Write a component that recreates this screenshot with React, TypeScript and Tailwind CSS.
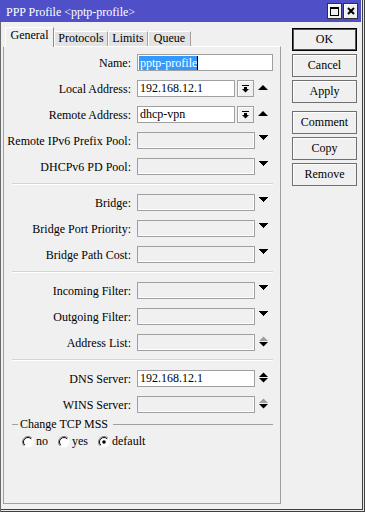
import React from "react";

const TriDown = () => (
  <svg width="9" height="13" viewBox="0 0 9 13" className="shrink-0" shapeRendering="crispEdges">
    <polygon points="0,1 9,1 4.5,6" fill="#000" />
  </svg>
);

const TriUp = () => (
  <svg width="10" height="13" viewBox="0 0 10 13" className="shrink-0">
    <polygon points="0,8 10,8 5,3" fill="#000" />
  </svg>
);

const UpDown = ({ upColor = "#000" }: { upColor?: string }) => (
  <svg width="9" height="13" viewBox="0 0 9 13" className="shrink-0">
    <polygon points="0,5 9,5 4.5,0.5" fill={upColor} />
    <polygon points="0,6 9,6 4.5,10.5" fill="#000" />
  </svg>
);

const DropBtn = () => (
  <div className="ml-[2px] w-[17px] h-[17px] border border-[#a0a0a0] bg-[#f0f0f0] shadow-[inset_1px_1px_0_#fff] flex items-center justify-center">
    <svg width="7" height="8" viewBox="0 0 7 8">
      <rect x="0" y="0" width="7" height="1" fill="#000" />
      <rect x="2" y="2" width="3" height="2" fill="#000" />
      <polygon points="0,4 7,4 3.5,7.5" fill="#000" />
    </svg>
  </div>
);

function Row({ label, children }: { label: string; children: React.ReactNode }) {
  return (
    <div className="flex h-[17px] items-center">
      <div className="w-[127px] shrink-0 text-right whitespace-nowrap leading-[14px]">{label}</div>
      <div className="ml-[6px] flex h-full items-start">{children}</div>
    </div>
  );
}

function Field({ w, value, enabled }: { w: string; value?: string; enabled?: boolean }) {
  return (
    <div
      className={`${w} h-[17px] border border-[#a0a0a0] pl-[2px] leading-[15px] whitespace-nowrap overflow-hidden ${
        enabled ? "bg-white" : "bg-[#f0f0f0] shadow-[inset_-1px_-1px_0_#fff]"
      }`}
    >
      {value}
    </div>
  );
}

const Arrow = ({ children }: { children: React.ReactNode }) => (
  <div className="ml-[4px] h-[17px] flex items-start pt-[2px]">{children}</div>
);

const Sep = () => (
  <div className="mt-[8px] mb-[9px] ml-[8px] w-[261px] h-[2px] border-t border-t-[#d5d5d5] border-b border-b-white" />
);

function Radio({ label, checked }: { label: string; checked?: boolean }) {
  return (
    <div className="flex items-center gap-[2px]">
      <svg width="12" height="12" viewBox="0 0 12 12" className="shrink-0">
        <circle cx="6" cy="6" r="5.5" fill="#fff" />
        <path d="M2.1 9.9 A5.5 5.5 0 0 1 9.9 2.1" stroke="#808080" strokeWidth="1" fill="none" />
        <path d="M2.8 9.2 A4.5 4.5 0 0 1 9.2 2.8" stroke="#000" strokeWidth="1" fill="none" />
        {checked && <circle cx="6" cy="6" r="1.8" fill="#000" />}
      </svg>
      <span className="leading-[13px]">{label}</span>
    </div>
  );
}

function Btn({ label, primary, className = "" }: { label: string; primary?: boolean; className?: string }) {
  return (
    <div
      className={`w-[65px] h-[23px] text-center leading-[21px] bg-[#f0f0f0] border ${
        primary
          ? "border-black shadow-[inset_0_0_0_1px_#555555]"
          : "border-[#707070] shadow-[inset_1px_1px_0_#ffffff]"
      } ${className}`}
    >
      {label}
    </div>
  );
}

export default function App() {
  return (
    <div className="w-[365px] h-[512px] overflow-hidden bg-[#f0f0f0] font-[family-name:'Liberation_Serif',serif] text-[12px] text-black shadow-[inset_1px_0_0_#6a6a6a,inset_-1px_-1px_0_#404040,inset_-2px_-2px_0_#e8e8e8,inset_-3px_-3px_0_#404040]">
      {/* Title bar */}
      <div className="h-[22px] mr-[4px] bg-[#4f4fc7] flex items-start text-white">
        <span className="pl-[6px] pt-[5px] leading-[14px] whitespace-nowrap">PPP Profile &lt;pptp-profile&gt;</span>
        <div className="ml-auto mr-[3px] mt-[3px] flex gap-[1px]">
          <div className="w-[15px] h-[16px] border border-[#303030] bg-[#f0f0f0] shadow-[inset_1px_1px_0_#fff] flex items-center justify-center">
            <div className="w-[9px] h-[9px] border border-black border-t-2" />
          </div>
          <div className="w-[15px] h-[16px] border border-[#303030] bg-[#f0f0f0] shadow-[inset_1px_1px_0_#fff] flex items-center justify-center">
            <svg width="8" height="8" viewBox="0 0 8 8">
              <path d="M1 1 L7 7 M7 1 L1 7" stroke="#000" strokeWidth="2" />
            </svg>
          </div>
        </div>
      </div>

      <div className="flex">
        {/* Left: tabs + panel */}
        <div className="ml-[3px] w-[278px] pt-[5px] flex flex-col">
          <div className="relative z-10 flex items-end h-[19px] pl-[2px]">
            <div className="w-[49px] h-[20px] -mb-[1px] bg-[#f0f0f0] border-l border-t border-r border-l-white border-t-white border-r-[#8a8a8a] text-center leading-[12px] pt-[1px]">
              General
            </div>
            <div className="w-[54px] h-[15px] bg-[#e3e3e3] border-l border-t border-r border-l-white border-t-white border-r-[#a0a0a0] text-center leading-[12px]">
              Protocols
            </div>
            <div className="w-[40px] h-[15px] bg-[#e3e3e3] border-l border-t border-r border-l-white border-t-white border-r-[#a0a0a0] text-center leading-[12px]">
              Limits
            </div>
            <div className="w-[43px] h-[15px] bg-[#e3e3e3] border-l border-t border-r border-l-white border-t-white border-r-[#a0a0a0] text-center leading-[12px]">
              Queue
            </div>
          </div>

          <div className="h-[458px] border border-[#a0a0a0] border-t-white bg-[#f0f0f0] flex flex-col pt-[7px]">
            <div className="flex flex-col gap-[9px]">
              <Row label="Name:">
                <div className="w-[136px] h-[17px] border border-[#a0a0a0] bg-white pl-[1px] pt-[1px] flex items-start">
                  <span className="bg-[#3399ff] text-white leading-[14px] pl-[1px] h-[14px]">pptp-profile</span>
                  <span className="w-px h-[14px] bg-black" />
                </div>
              </Row>
              <Row label="Local Address:">
                <Field w="w-[98px]" value="192.168.12.1" enabled />
                <DropBtn />
                <Arrow>
                  <TriUp />
                </Arrow>
              </Row>
              <Row label="Remote Address:">
                <Field w="w-[98px]" value="dhcp-vpn" enabled />
                <DropBtn />
                <Arrow>
                  <TriUp />
                </Arrow>
              </Row>
              <Row label="Remote IPv6 Prefix Pool:">
                <Field w="w-[118px]" />
                <Arrow>
                  <TriDown />
                </Arrow>
              </Row>
              <Row label="DHCPv6 PD Pool:">
                <Field w="w-[118px]" />
                <Arrow>
                  <TriDown />
                </Arrow>
              </Row>
            </div>
            <Sep />
            <div className="flex flex-col gap-[9px]">
              <Row label="Bridge:">
                <Field w="w-[118px]" />
                <Arrow>
                  <TriDown />
                </Arrow>
              </Row>
              <Row label="Bridge Port Priority:">
                <Field w="w-[118px]" />
                <Arrow>
                  <TriDown />
                </Arrow>
              </Row>
              <Row label="Bridge Path Cost:">
                <Field w="w-[118px]" />
                <Arrow>
                  <TriDown />
                </Arrow>
              </Row>
            </div>
            <Sep />
            <div className="flex flex-col gap-[9px]">
              <Row label="Incoming Filter:">
                <Field w="w-[118px]" />
                <Arrow>
                  <TriDown />
                </Arrow>
              </Row>
              <Row label="Outgoing Filter:">
                <Field w="w-[118px]" />
                <Arrow>
                  <TriDown />
                </Arrow>
              </Row>
              <Row label="Address List:">
                <Field w="w-[118px]" />
                <Arrow>
                  <UpDown upColor="#9aa29a" />
                </Arrow>
              </Row>
            </div>
            <Sep />
            <div className="flex flex-col gap-[9px]">
              <Row label="DNS Server:">
                <Field w="w-[118px]" value="192.168.12.1" enabled />
                <Arrow>
                  <UpDown />
                </Arrow>
              </Row>
              <Row label="WINS Server:">
                <Field w="w-[118px]" />
                <Arrow>
                  <UpDown upColor="#9aa29a" />
                </Arrow>
              </Row>
            </div>

            <div className="mt-[4px] ml-[8px] w-[261px] h-[14px] flex items-center">
              <div className="w-[6px] h-px bg-[#a0a0a0]" />
              <span className="pl-[2px] pr-[5px] leading-[14px] whitespace-nowrap">Change TCP MSS</span>
              <div className="flex-1 h-px bg-[#a0a0a0]" />
            </div>
            <div className="mt-[4px] ml-[18px] h-[13px] flex items-center gap-[10px]">
              <Radio label="no" />
              <Radio label="yes" />
              <Radio label="default" checked />
            </div>
          </div>
        </div>

        {/* Right: buttons */}
        <div className="ml-[11px] mt-[6px] w-[65px] flex flex-col gap-[3px]">
          <Btn label="OK" primary />
          <Btn label="Cancel" />
          <Btn label="Apply" />
          <Btn label="Comment" className="mt-[5px]" />
          <Btn label="Copy" />
          <Btn label="Remove" />
        </div>
      </div>
    </div>
  );
}
